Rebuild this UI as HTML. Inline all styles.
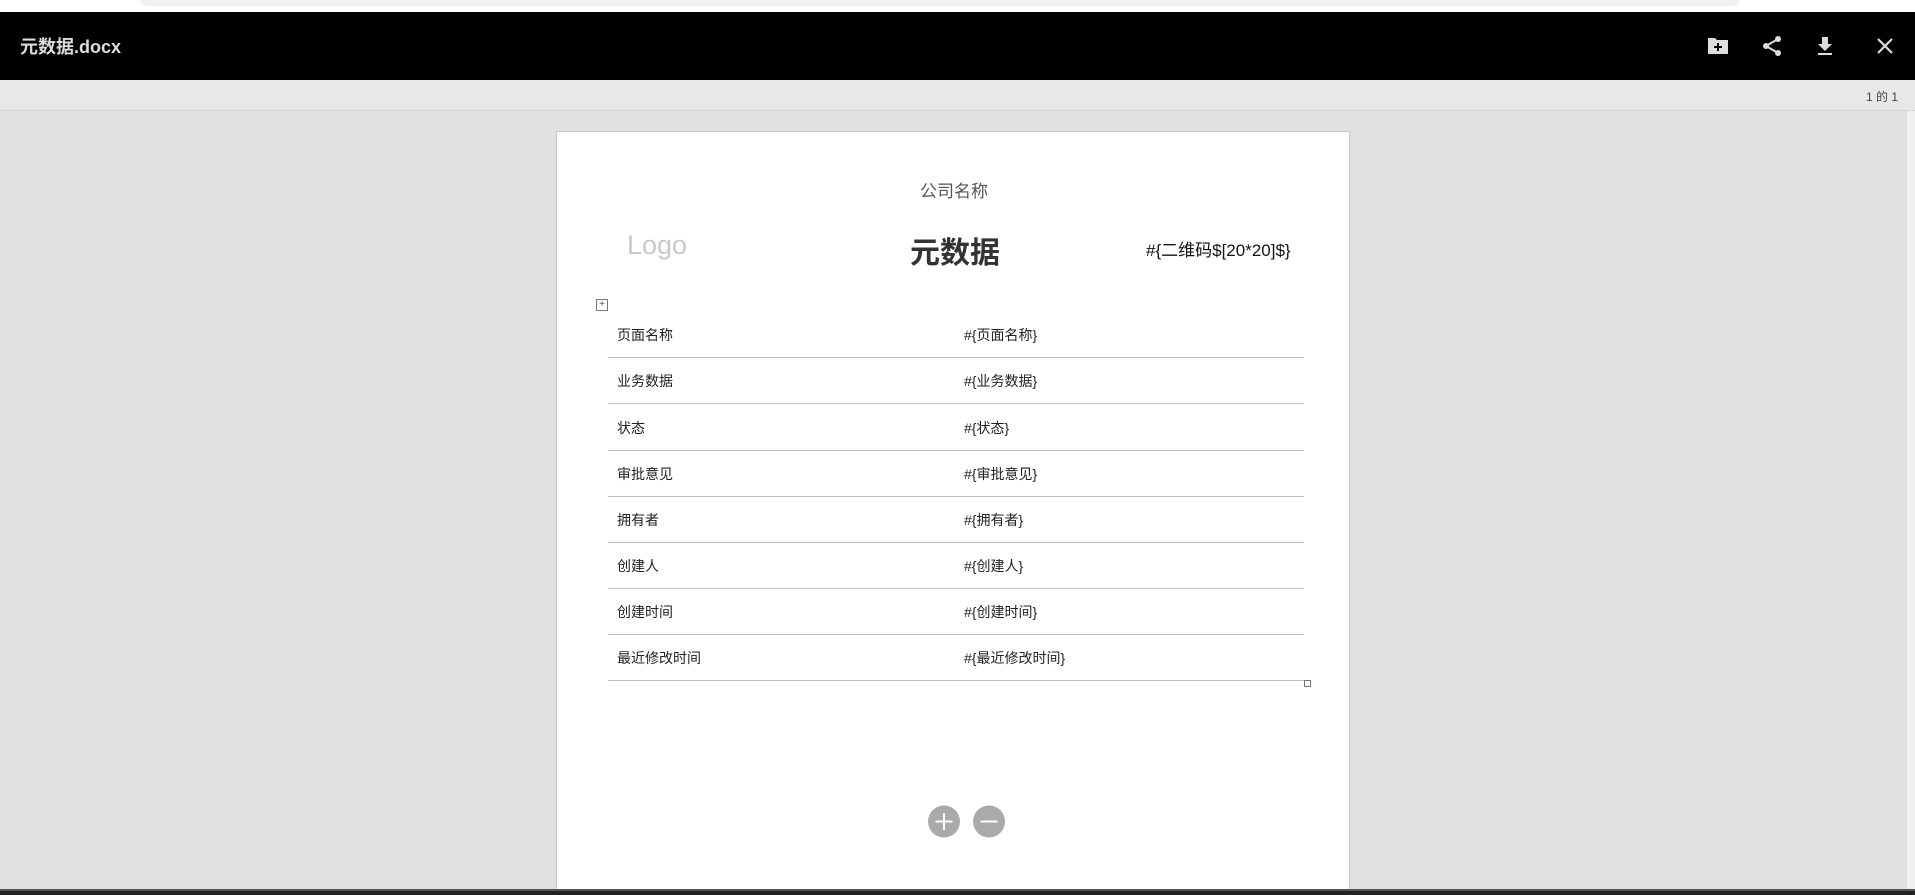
<!DOCTYPE html>
<html><head><meta charset="utf-8"><style>
*{margin:0;padding:0;box-sizing:border-box}
html,body{width:1915px;height:895px;overflow:hidden}
body{background:#e0e0e0;font-family:"Liberation Sans","Noto Sans CJK SC",sans-serif;position:relative}
.a{position:absolute}
.row{position:absolute;left:608px;width:696px;height:46px;border-bottom:1px solid #c0c0c0;font-size:14px;color:#222}
.row span{position:absolute;top:13px}
</style></head><body>
<div class="a" style="left:0;top:0;width:1915px;height:12px;background:#fff"></div>
<div class="a" style="left:140px;top:0;width:1600px;height:6px;background:#f0f1f4;border-radius:0 0 6px 6px"></div>
<div class="a" style="left:0;top:12px;width:1915px;height:68px;background:#000"></div>
<div class="a" style="left:20px;top:33px;font-size:18px;font-weight:bold;color:#ddd">元数据.docx</div>
<svg class="a" style="left:1705px;top:34px" width="26" height="24" viewBox="0 0 24 24"><path d="M2 4h7l2 2h11v14H2z" fill="#ddd"/><path d="M12 9v8M8 13h8" stroke="#000" stroke-width="2"/></svg>
<svg class="a" style="left:1760px;top:34px" width="24" height="24" viewBox="0 0 24 24"><circle cx="18" cy="5" r="3" fill="#ddd"/><circle cx="6" cy="12" r="3" fill="#ddd"/><circle cx="18" cy="19" r="3" fill="#ddd"/><path d="M18 5L6 12l12 7" stroke="#ddd" stroke-width="2" fill="none"/></svg>
<svg class="a" style="left:1813px;top:34px" width="24" height="24" viewBox="0 0 24 24"><path d="M9 3h6v7h4l-7 7-7-7h4z" fill="#ddd"/><rect x="5" y="19" width="14" height="2" fill="#ddd"/></svg>
<svg class="a" style="left:1873px;top:34px" width="24" height="24" viewBox="0 0 24 24"><path d="M5 5l14 14M19 5L5 19" stroke="#ddd" stroke-width="2.2"/></svg>
<div class="a" style="left:0;top:80px;width:1915px;height:31px;background:#e8e8e8;border-bottom:1px solid #d6d6d6"></div>
<div class="a" style="left:1866px;top:88px;font-size:12px;color:#444">1 的 1</div>
<div class="a" style="left:1906px;top:111px;width:9px;height:778px;background:#f0f0f0;border-left:1px solid #ddd"></div>
<div class="a" style="left:556px;top:131px;width:794px;height:758px;background:#fff;border:1px solid #c8c8c8;border-bottom:none"></div>
<div class="a" style="left:556px;width:794px;top:177px;text-align:center;font-size:17px;color:#555;padding-left:2px">公司名称</div>
<div class="a" style="left:627px;top:230px;font-size:27px;color:#c8c8c8">Logo</div>
<div class="a" style="left:855px;width:200px;top:228px;text-align:center;font-size:30px;font-weight:bold;color:#333">元数据</div>
<div class="a" style="left:1146px;top:236px;font-size:17px;color:#111">#{二维码$[20*20]$}</div>
<div class="a" style="left:596px;top:299px;width:12px;height:12px;border:1px solid #777;font-size:10px;line-height:10px;text-align:center;color:#555">+</div>
<div class="row" style="top:312px"><span style="left:9px">页面名称</span><span style="left:356px">#{页面名称}</span></div>
<div class="row" style="top:358px"><span style="left:9px">业务数据</span><span style="left:356px">#{业务数据}</span></div>
<div class="row" style="top:405px"><span style="left:9px">状态</span><span style="left:356px">#{状态}</span></div>
<div class="row" style="top:451px"><span style="left:9px">审批意见</span><span style="left:356px">#{审批意见}</span></div>
<div class="row" style="top:497px"><span style="left:9px">拥有者</span><span style="left:356px">#{拥有者}</span></div>
<div class="row" style="top:543px"><span style="left:9px">创建人</span><span style="left:356px">#{创建人}</span></div>
<div class="row" style="top:589px"><span style="left:9px">创建时间</span><span style="left:356px">#{创建时间}</span></div>
<div class="row" style="top:635px"><span style="left:9px">最近修改时间</span><span style="left:356px">#{最近修改时间}</span></div>
<div class="a" style="left:1304px;top:680px;width:7px;height:7px;border:1px solid #777;background:#fff"></div>
<svg class="a" style="left:927px;top:805px" width="80" height="33" viewBox="0 0 80 33"><circle cx="17" cy="16.5" r="16" fill="#aaa"/><path d="M17 8v17M8.5 16.5h17" stroke="#fff" stroke-width="2"/><circle cx="62" cy="16.5" r="16" fill="#aaa"/><path d="M53.5 16.5h17" stroke="#fff" stroke-width="2"/></svg>
<div class="a" style="left:0;top:889px;width:1915px;height:6px;background:#222;border-top:2px solid #555"></div>
</body></html>
